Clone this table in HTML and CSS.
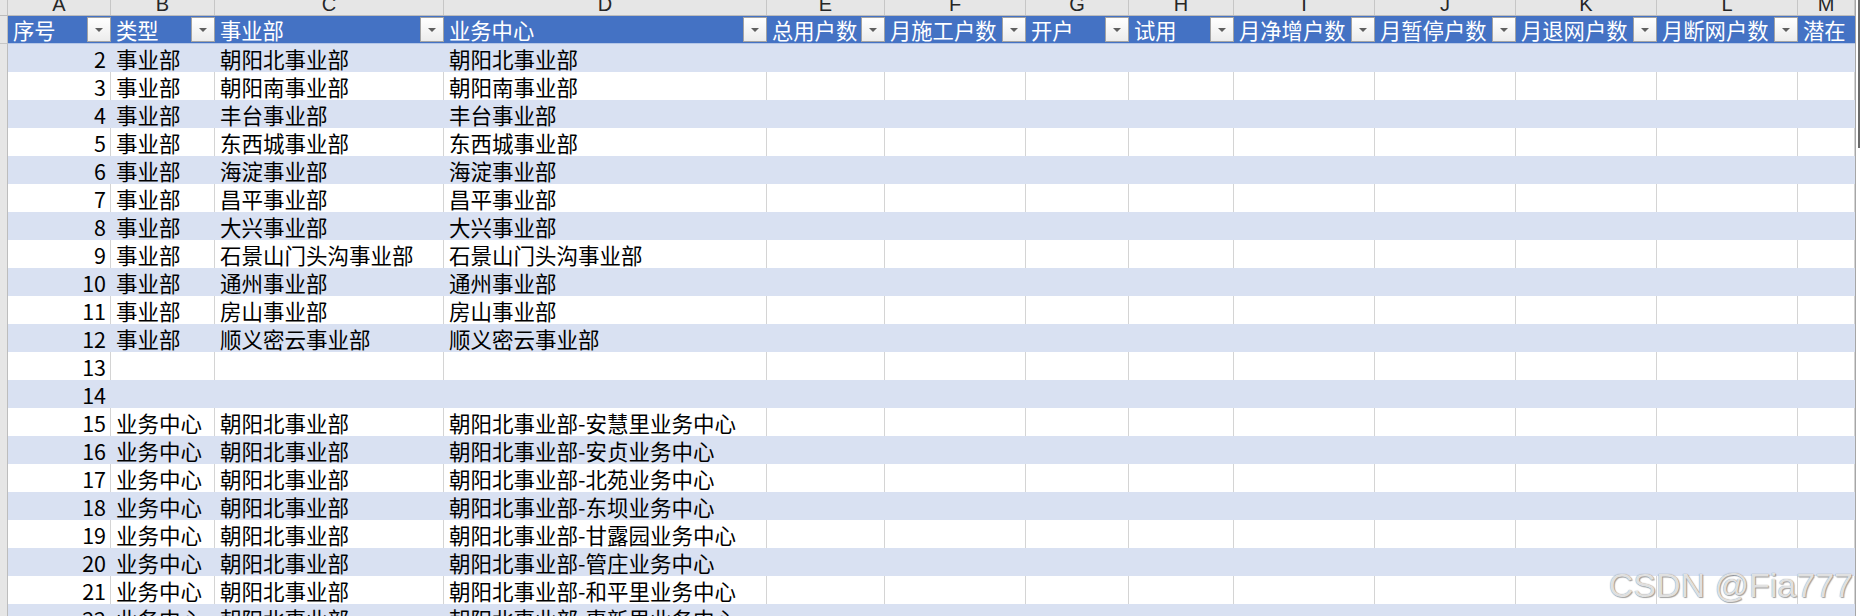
FILE: index.html
```html
<!DOCTYPE html>
<html lang="zh-CN">
<head>
<meta charset="utf-8">
<title>Sheet</title>
<link rel="stylesheet" href="styles.css">
</head>
<body>
<div class="sheet">
  <div class="grid">
    <div class="colhead">
      <div class="corner"></div>
      <div class="cl">A</div><div class="cl">B</div><div class="cl">C</div><div class="cl">D</div>
      <div class="cl">E</div><div class="cl">F</div><div class="cl">G</div><div class="cl">H</div>
      <div class="cl">I</div><div class="cl">J</div><div class="cl">K</div><div class="cl">L</div>
      <div class="cl">M</div>
    </div>
    <div class="hrow">
      <div class="rh"></div>
      <div class="hc"><span>序号</span><span class="dd"></span></div>
      <div class="hc"><span>类型</span><span class="dd"></span></div>
      <div class="hc"><span>事业部</span><span class="dd"></span></div>
      <div class="hc"><span>业务中心</span><span class="dd"></span></div>
      <div class="hc"><span>总用户数</span><span class="dd"></span></div>
      <div class="hc"><span>月施工户数</span><span class="dd"></span></div>
      <div class="hc"><span>开户</span><span class="dd"></span></div>
      <div class="hc"><span>试用</span><span class="dd"></span></div>
      <div class="hc"><span>月净增户数</span><span class="dd"></span></div>
      <div class="hc"><span>月暂停户数</span><span class="dd"></span></div>
      <div class="hc"><span>月退网户数</span><span class="dd"></span></div>
      <div class="hc"><span>月断网户数</span><span class="dd"></span></div>
      <div class="hc"><span>潜在</span></div>
    </div>

    <div class="row band"><div class="rh"></div><div class="c num">2</div><div class="c">事业部</div><div class="c">朝阳北事业部</div><div class="c">朝阳北事业部</div><div class="c"></div><div class="c"></div><div class="c"></div><div class="c"></div><div class="c"></div><div class="c"></div><div class="c"></div><div class="c"></div><div class="c"></div></div>
    <div class="row"><div class="rh"></div><div class="c num">3</div><div class="c">事业部</div><div class="c">朝阳南事业部</div><div class="c">朝阳南事业部</div><div class="c"></div><div class="c"></div><div class="c"></div><div class="c"></div><div class="c"></div><div class="c"></div><div class="c"></div><div class="c"></div><div class="c"></div></div>
    <div class="row band"><div class="rh"></div><div class="c num">4</div><div class="c">事业部</div><div class="c">丰台事业部</div><div class="c">丰台事业部</div><div class="c"></div><div class="c"></div><div class="c"></div><div class="c"></div><div class="c"></div><div class="c"></div><div class="c"></div><div class="c"></div><div class="c"></div></div>
    <div class="row"><div class="rh"></div><div class="c num">5</div><div class="c">事业部</div><div class="c">东西城事业部</div><div class="c">东西城事业部</div><div class="c"></div><div class="c"></div><div class="c"></div><div class="c"></div><div class="c"></div><div class="c"></div><div class="c"></div><div class="c"></div><div class="c"></div></div>
    <div class="row band"><div class="rh"></div><div class="c num">6</div><div class="c">事业部</div><div class="c">海淀事业部</div><div class="c">海淀事业部</div><div class="c"></div><div class="c"></div><div class="c"></div><div class="c"></div><div class="c"></div><div class="c"></div><div class="c"></div><div class="c"></div><div class="c"></div></div>
    <div class="row"><div class="rh"></div><div class="c num">7</div><div class="c">事业部</div><div class="c">昌平事业部</div><div class="c">昌平事业部</div><div class="c"></div><div class="c"></div><div class="c"></div><div class="c"></div><div class="c"></div><div class="c"></div><div class="c"></div><div class="c"></div><div class="c"></div></div>
    <div class="row band"><div class="rh"></div><div class="c num">8</div><div class="c">事业部</div><div class="c">大兴事业部</div><div class="c">大兴事业部</div><div class="c"></div><div class="c"></div><div class="c"></div><div class="c"></div><div class="c"></div><div class="c"></div><div class="c"></div><div class="c"></div><div class="c"></div></div>
    <div class="row"><div class="rh"></div><div class="c num">9</div><div class="c">事业部</div><div class="c">石景山门头沟事业部</div><div class="c">石景山门头沟事业部</div><div class="c"></div><div class="c"></div><div class="c"></div><div class="c"></div><div class="c"></div><div class="c"></div><div class="c"></div><div class="c"></div><div class="c"></div></div>
    <div class="row band"><div class="rh"></div><div class="c num">10</div><div class="c">事业部</div><div class="c">通州事业部</div><div class="c">通州事业部</div><div class="c"></div><div class="c"></div><div class="c"></div><div class="c"></div><div class="c"></div><div class="c"></div><div class="c"></div><div class="c"></div><div class="c"></div></div>
    <div class="row"><div class="rh"></div><div class="c num">11</div><div class="c">事业部</div><div class="c">房山事业部</div><div class="c">房山事业部</div><div class="c"></div><div class="c"></div><div class="c"></div><div class="c"></div><div class="c"></div><div class="c"></div><div class="c"></div><div class="c"></div><div class="c"></div></div>
    <div class="row band"><div class="rh"></div><div class="c num">12</div><div class="c">事业部</div><div class="c">顺义密云事业部</div><div class="c">顺义密云事业部</div><div class="c"></div><div class="c"></div><div class="c"></div><div class="c"></div><div class="c"></div><div class="c"></div><div class="c"></div><div class="c"></div><div class="c"></div></div>
    <div class="row"><div class="rh"></div><div class="c num">13</div><div class="c"></div><div class="c"></div><div class="c"></div><div class="c"></div><div class="c"></div><div class="c"></div><div class="c"></div><div class="c"></div><div class="c"></div><div class="c"></div><div class="c"></div><div class="c"></div></div>
    <div class="row band"><div class="rh"></div><div class="c num">14</div><div class="c"></div><div class="c"></div><div class="c"></div><div class="c"></div><div class="c"></div><div class="c"></div><div class="c"></div><div class="c"></div><div class="c"></div><div class="c"></div><div class="c"></div><div class="c"></div></div>
    <div class="row"><div class="rh"></div><div class="c num">15</div><div class="c">业务中心</div><div class="c">朝阳北事业部</div><div class="c">朝阳北事业部-安慧里业务中心</div><div class="c"></div><div class="c"></div><div class="c"></div><div class="c"></div><div class="c"></div><div class="c"></div><div class="c"></div><div class="c"></div><div class="c"></div></div>
    <div class="row band"><div class="rh"></div><div class="c num">16</div><div class="c">业务中心</div><div class="c">朝阳北事业部</div><div class="c">朝阳北事业部-安贞业务中心</div><div class="c"></div><div class="c"></div><div class="c"></div><div class="c"></div><div class="c"></div><div class="c"></div><div class="c"></div><div class="c"></div><div class="c"></div></div>
    <div class="row"><div class="rh"></div><div class="c num">17</div><div class="c">业务中心</div><div class="c">朝阳北事业部</div><div class="c">朝阳北事业部-北苑业务中心</div><div class="c"></div><div class="c"></div><div class="c"></div><div class="c"></div><div class="c"></div><div class="c"></div><div class="c"></div><div class="c"></div><div class="c"></div></div>
    <div class="row band"><div class="rh"></div><div class="c num">18</div><div class="c">业务中心</div><div class="c">朝阳北事业部</div><div class="c">朝阳北事业部-东坝业务中心</div><div class="c"></div><div class="c"></div><div class="c"></div><div class="c"></div><div class="c"></div><div class="c"></div><div class="c"></div><div class="c"></div><div class="c"></div></div>
    <div class="row"><div class="rh"></div><div class="c num">19</div><div class="c">业务中心</div><div class="c">朝阳北事业部</div><div class="c">朝阳北事业部-甘露园业务中心</div><div class="c"></div><div class="c"></div><div class="c"></div><div class="c"></div><div class="c"></div><div class="c"></div><div class="c"></div><div class="c"></div><div class="c"></div></div>
    <div class="row band"><div class="rh"></div><div class="c num">20</div><div class="c">业务中心</div><div class="c">朝阳北事业部</div><div class="c">朝阳北事业部-管庄业务中心</div><div class="c"></div><div class="c"></div><div class="c"></div><div class="c"></div><div class="c"></div><div class="c"></div><div class="c"></div><div class="c"></div><div class="c"></div></div>
    <div class="row"><div class="rh"></div><div class="c num">21</div><div class="c">业务中心</div><div class="c">朝阳北事业部</div><div class="c">朝阳北事业部-和平里业务中心</div><div class="c"></div><div class="c"></div><div class="c"></div><div class="c"></div><div class="c"></div><div class="c"></div><div class="c"></div><div class="c"></div><div class="c"></div></div>
    <div class="row band"><div class="rh"></div><div class="c num">22</div><div class="c">业务中心</div><div class="c">朝阳北事业部</div><div class="c">朝阳北事业部-惠新里业务中心</div><div class="c"></div><div class="c"></div><div class="c"></div><div class="c"></div><div class="c"></div><div class="c"></div><div class="c"></div><div class="c"></div><div class="c"></div></div>
  </div>
  <div class="vscroll"><div class="thumb"></div></div>
  <div class="watermark">CSDN @Fia777</div>
</div>
</body>
</html>
```
FILE: styles.css
```css
html, body {
  margin: 0;
  padding: 0;
  background: #ffffff;
}

.sheet {
  position: relative;
  display: flex;
  width: 1861px;
  height: 616px;
  overflow: hidden;
  font-family: "Noto Sans CJK SC", "Noto Sans", sans-serif;
  color: #000;
}

.grid {
  display: flex;
  flex-direction: column;
  width: 1855px;
  flex: none;
}

.colhead,
.hrow,
.row {
  display: grid;
  grid-template-columns: 8px 103px 104px 229px 323px 118px 141px 103px 105px 141px 141px 141px 141px 57px;
  flex: none;
}

/* column letters */
.colhead {
  height: 16px;
  background: #e6e6e6;
  border-bottom: 1px solid #bcbcbc;
  box-sizing: border-box;
  overflow: hidden;
}
.corner {
  background: #e6e6e6;
  border-right: 1px solid #c4c4c4;
}
.cl {
  font-family: "Liberation Sans", Arial, sans-serif;
  font-size: 20px;
  line-height: 8px;
  height: 15px;
  overflow: hidden;
  text-align: center;
  color: #262626;
  border-right: 1px solid #c6c6c6;
}

/* table header */
.hrow {
  height: 28px;
  box-sizing: border-box;
}
.hrow .rh {
  border-bottom: 1px solid #c6c6c6;
}
.hc {
  display: flex;
  align-items: center;
  justify-content: space-between;
  background: #4472c4;
  color: #ffffff;
  font-size: 21.3px;
  line-height: 27px;
  padding-left: 5px;
  white-space: nowrap;
  border-bottom: 1px solid #b4c6e7;
  box-sizing: border-box;
}
.dd {
  flex: none;
  display: flex;
  align-items: center;
  justify-content: center;
  width: 24px;
  height: 25px;
  box-sizing: border-box;
  margin-right: 0;
  background: linear-gradient(#ffffff, #ececec);
  border: 1px solid #a3a3a3;
}
.dd::after {
  content: "";
  width: 0;
  height: 0;
  border-left: 4px solid transparent;
  border-right: 4px solid transparent;
  border-top: 4px solid #5f5f5f;
}

/* rows */
.row {
  height: 28px;
}
.rh {
  background: #e6e6e6;
  border-right: 1px solid #bdbdbd;
  border-bottom: 1px solid #c6c6c6;
  box-sizing: border-box;
}
.c {
  box-sizing: border-box;
  font-size: 21.5px;
  line-height: 27px;
  padding-left: 5px;
  padding-top: 1px;
  white-space: nowrap;
  background: #ffffff;
  border-right: 1px solid #d4d4d4;
  border-bottom: 1px solid #8ea9db;
}
.c.num {
  text-align: right;
  padding-left: 0;
  padding-right: 4px;
}
.row.band .c {
  background: #d9e1f2;
  border-right-color: #d9e1f2;
}

/* right edge */
.vscroll {
  flex: none;
  width: 6px;
  height: 616px;
  background: #ffffff;
  border-left: 1px solid #a6a6a6;
  box-sizing: border-box;
  display: flex;
  flex-direction: column;
}
.thumb {
  margin-left: 2px;
  width: 2px;
  height: 148px;
  background: #6b6b6b;
}

.watermark {
  position: absolute;
  right: 8px;
  bottom: 14px;
  font-family: "Liberation Sans", Arial, sans-serif;
  font-size: 34px;
  line-height: 34px;
  color: rgba(255, 255, 255, 0.8);
  text-shadow: 0 0 1px #6f6f6f, 1px 1px 1px rgba(0, 0, 0, 0.35);
  white-space: nowrap;
}
```
